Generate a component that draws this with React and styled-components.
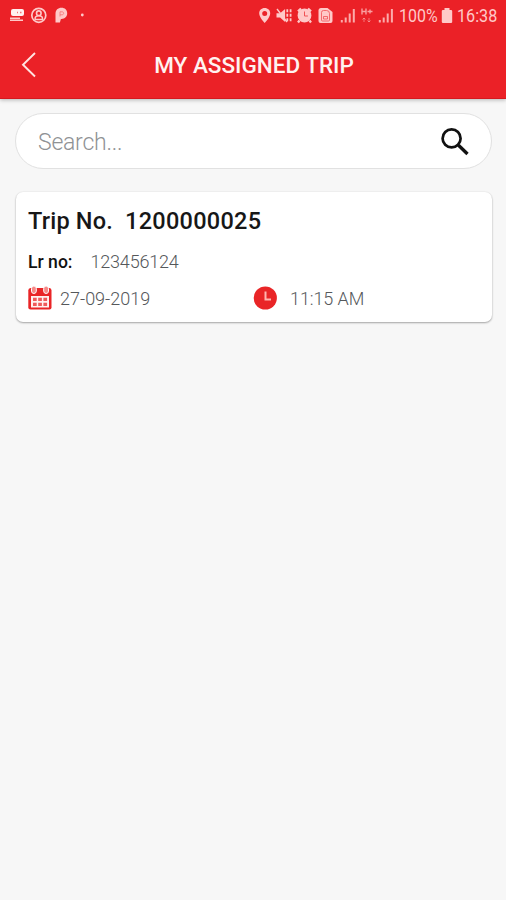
import React from "react";
import styled, { createGlobalStyle } from "styled-components";

const Global = createGlobalStyle`
  * { box-sizing: border-box; }
  body { margin: 0; background: #f7f7f7; font-family: Roboto, "Noto Sans", sans-serif; }
  svg { display: block; flex: none; }
`;

const Screen = styled.div`
  width: 506px;
  height: 900px;
  overflow: hidden;
  background: #f7f7f7;
`;

const Header = styled.header`
  height: 99px;
  background: #eb2127;
  border-bottom: 1px solid #d5191f;
  box-shadow: 0 1px 4px rgba(0, 0, 0, 0.28);
`;

const StatusBar = styled.div`
  height: 32px;
  display: flex;
  align-items: center;
  color: #ffc9c8;
`;

const StatusText = styled.span`
  flex: none;
  width: ${(p) => p.$width}px;
  margin-left: ${(p) => p.$gap}px;
  font-size: 19px;
  line-height: 32px;
  white-space: nowrap;
  transform: scaleX(${(p) => p.$scale});
  transform-origin: left center;
`;

const TitleBar = styled.div`
  height: 66px;
  display: grid;
  grid-template-columns: 60px 1fr 60px;
  align-items: center;
  padding-left: 1px;
`;

const BackButton = styled.button`
  height: 66px;
  padding: 0 0 0 19px;
  border: 0;
  background: none;
`;

const Title = styled.h1`
  margin: 0;
  padding-left: 1px;
  color: #fff2f0;
  font-size: 22.5px;
  font-weight: 500;
  line-height: 66px;
  text-align: center;
  white-space: nowrap;
`;

const Content = styled.main`
  padding: 14px 14px 0 15px;
`;

const SearchBox = styled.label`
  height: 56px;
  display: flex;
  align-items: center;
  justify-content: space-between;
  padding: 1px 21px 0 22px;
  border: 1px solid #e1e1e1;
  border-radius: 28px;
  background: #fff;
`;

const SearchInput = styled.input`
  width: 300px;
  padding: 2px 0 0;
  border: 0;
  outline: 0;
  background: none;
  font: 300 23px Roboto, sans-serif;
  letter-spacing: -0.25px;
  &::placeholder { color: #8f9295; opacity: 1; }
`;

const Card = styled.article`
  height: 130px;
  margin: 23px 0 0 1px;
  padding: 12px 12px 0;
  border-radius: 7px;
  background: #fff;
  box-shadow: 0 1px 2px rgba(0, 0, 0, 0.32), 0 0 2px rgba(0, 0, 0, 0.08);
`;

const CardRow = styled.div`
  display: flex;
  align-items: center;
  height: ${(p) => p.$height}px;
  white-space: nowrap;
`;

const TripTitle = styled.h2`
  display: flex;
  gap: 13px;
  margin: 0;
  color: #171717;
  font-size: 23.5px;
  font-weight: 500;
  line-height: 34px;
`;

const TripLabel = styled.span`
  width: 84px;
  letter-spacing: 0.2px;
  white-space: nowrap;
`;

const TripNumber = styled.span`
  letter-spacing: 0.28px;
`;

const Label = styled.span`
  width: 62.5px;
  color: #111;
  font-size: 17.6px;
  font-weight: 500;
`;

const Value = styled.span`
  margin-left: ${(p) => p.$gap || 0}px;
  color: #55585b;
  font-size: 18px;
  font-weight: 300;
  letter-spacing: ${(p) => p.$spacing || 0}px;
`;

const DateCell = styled.div`
  display: flex;
  align-items: center;
  width: 225px;
`;

const TimeCell = styled.div`
  display: flex;
  align-items: center;
`;

const StatusIcons = () => (
  <>
    <svg width="258" height="32" viewBox="0 0 258 32" fill="currentColor">
      <rect x="11" y="9" width="13" height="7" rx="2" fill="#fff0ef" />
      <path d="M17 12.5h1m2 0h1.5" stroke="#f47173" strokeWidth="1.5" />
      <path d="M10 18.3h10M10 20.3h13" stroke="currentColor" strokeWidth="1.5" />
      <circle cx="38.8" cy="15.3" r="7" fill="none" stroke="currentColor" strokeWidth="1.7" />
      <circle cx="38.8" cy="13.2" r="2.3" fill="none" stroke="currentColor" strokeWidth="1.6" />
      <path d="M35.1 19.4v-.8c0-3.8 7.4-3.8 7.4 0v.8z" fill="none" stroke="currentColor" strokeWidth="1.5" />
      <path d="M55.5 22.5V14c0-4 2.4-6.2 6-6.2 3.4 0 5.7 2.2 5.7 5.4 0 3.5-2.6 6-6.3 5.7l-1 3.6z" />
      <path d="M60 16.5v-4.7h2c2.2 0 2.2 3 0 3h-2" fill="none" stroke="#f47173" strokeWidth=".8" />
      <circle cx="82.3" cy="15" r="1.4" />
    </svg>
    <svg width="82" height="32" viewBox="258 0 82 32" fill="currentColor">
      <path fillRule="evenodd" d="M264.7 8c-3.3 0-5.5 2.4-5.5 5.4 0 3.7 5.5 9.5 5.5 9.5s5.5-5.8 5.5-9.5c0-3-2.2-5.4-5.5-5.4m0 3a2.5 2.5 0 1 0 0 5 2.5 2.5 0 0 0 0-5" />
      <path d="M276.5 13.2h3.6l5-4.3v13l-5-4.5h-3.6z" />
      <path d="m277 9 10 13" stroke="currentColor" strokeWidth="1.4" />
      <path d="M287.3 9.2v13m3.3-13v13" stroke="currentColor" strokeWidth="1.8" strokeDasharray="3 1.5" />
      <path d="M298 11.3 301 8.5M311 11.3 308 8.5M299.5 20.5 298 22.5M309.5 20.5l1.5 2" stroke="currentColor" strokeWidth="2.3" />
      <circle cx="304.5" cy="15.5" r="6.9" />
      <path d="M304.5 11.5V16h3.4" fill="none" stroke="#f05255" strokeWidth="1" />
      <path d="M318.5 10.5q0-2.5 2.5-2.5h6.5l5 4v9q0 2-2 2h-10q-2 0-2-2z" />
      <path d="M321.5 20v-7.5q0-2 2-2h3q3 0 3 3V20q0 1-1 1h-6q-1 0-1-1m2-3.5h4V19h-4z" fill="none" stroke="#f05255" strokeWidth=".8" />
    </svg>
    <svg width="57" height="32" viewBox="340 0 57 32" fill="currentColor">
      <path d="M340.8 20h2v2.6h-2zM344.7 17.5h2v5.1h-2zM348.7 13.5h2v9.1h-2zM352.8 9h2v13.6h-2z" opacity=".82" />
      <path d="M362 8.5v6m4-6v6m-4-3h4m1.5 0h5m-2.5-2v4" stroke="currentColor" strokeWidth="1.4" opacity=".75" />
      <path d="M364 22v-4m-1.5 1.5L364 18l1.5 1.5M369 18v4m-1.5-1.5L369 22l1.5-1.5" stroke="currentColor" fill="none" opacity=".5" />
      <path d="M378.8 20h2v2.6h-2zM382.7 17.5h2v5.1h-2zM386.7 13.5h2v9.1h-2zM390.9 9h2v13.6h-2z" opacity=".82" />
    </svg>
  </>
);

const BackIcon = () => (
  <svg width="20" height="28" viewBox="0 0 20 28" fill="none">
    <path d="M15 2 3 13.7 15 25.5" stroke="#ffe3e1" strokeWidth="1.9" />
  </svg>
);

const SearchIcon = () => (
  <svg width="30" height="30" viewBox="0 0 30 30" fill="none" stroke="#111">
    <circle cx="11.6" cy="11.4" r="9" strokeWidth="2.7" />
    <path d="m18.5 18.2 9 8.8" strokeWidth="3.3" />
  </svg>
);

const CalendarIcon = () => (
  <svg width="24" height="24" viewBox="0 0 24 24">
    <path d="M2.5 2h19q2 0 2 2.5v17q0 2-2 2h-19q-2.2 0-2.2-2v-17Q.3 2 2.5 2" fill="#e92527" />
    <path d="M3 10h18v11.5H3z" fill="#fff1f0" />
    <path d="M5 11.7h3.7V15H5zM10.2 11.7h3.7V15h-3.7zM15.4 11.7h3.7V15h-3.7zM5 16.8h3.7V20H5zM10.2 16.8h3.7V20h-3.7zM15.4 16.8h3.7V20h-3.7z" fill="#ef5a5a" />
    <rect x="3.5" y="0" width="4.8" height="7.5" rx="2.4" fill="#f58a88" stroke="#fff" strokeWidth="1" />
    <rect x="15.7" y="0" width="4.8" height="7.5" rx="2.4" fill="#f58a88" stroke="#fff" strokeWidth="1" />
  </svg>
);

const ClockIcon = () => (
  <svg width="24" height="24" viewBox="0 0 24 24">
    <circle cx="12.3" cy="12" r="11.6" fill="#e92527" />
    <path d="M12.5 5.5v8H18" fill="none" stroke="#ffb5b0" strokeWidth="2" />
  </svg>
);

const BatteryIcon = () => (
  <svg width="12" height="18" viewBox="0 0 12 18" fill="currentColor">
    <path d="M3.5 1h5v2H10q1.2 0 1.2 1v11q0 1-1.2 1H2q-1.2 0-1.2-1V4q0-1 1.2-1h1.5z" />
  </svg>
);

export default function App() {
  return (
    <Screen>
      <Global />
      <Header>
        <StatusBar>
          <StatusIcons />
          <StatusText $width={42} $gap={1.5} $scale={0.84}>100%</StatusText>
          <BatteryIcon />
          <StatusText $width={42} $gap={4.3} $scale={0.85}>16:38</StatusText>
        </StatusBar>
        <TitleBar>
          <BackButton aria-label="Back"><BackIcon /></BackButton>
          <Title>MY ASSIGNED TRIP</Title>
        </TitleBar>
      </Header>
      <Content>
        <SearchBox>
          <SearchInput placeholder="Search..." />
          <SearchIcon />
        </SearchBox>
        <Card>
          <TripTitle>
            <TripLabel>Trip No.</TripLabel>
            <TripNumber>1200000025</TripNumber>
          </TripTitle>
          <CardRow $height={47}>
            <Label>Lr no:</Label>
            <Value $spacing={-0.2}>123456124</Value>
          </CardRow>
          <CardRow $height={26}>
            <DateCell>
              <CalendarIcon />
              <Value $gap={8}>27-09-2019</Value>
            </DateCell>
            <TimeCell>
              <ClockIcon />
              <Value $gap={13} $spacing={-0.1}>11:15 AM</Value>
            </TimeCell>
          </CardRow>
        </Card>
      </Content>
    </Screen>
  );
}
